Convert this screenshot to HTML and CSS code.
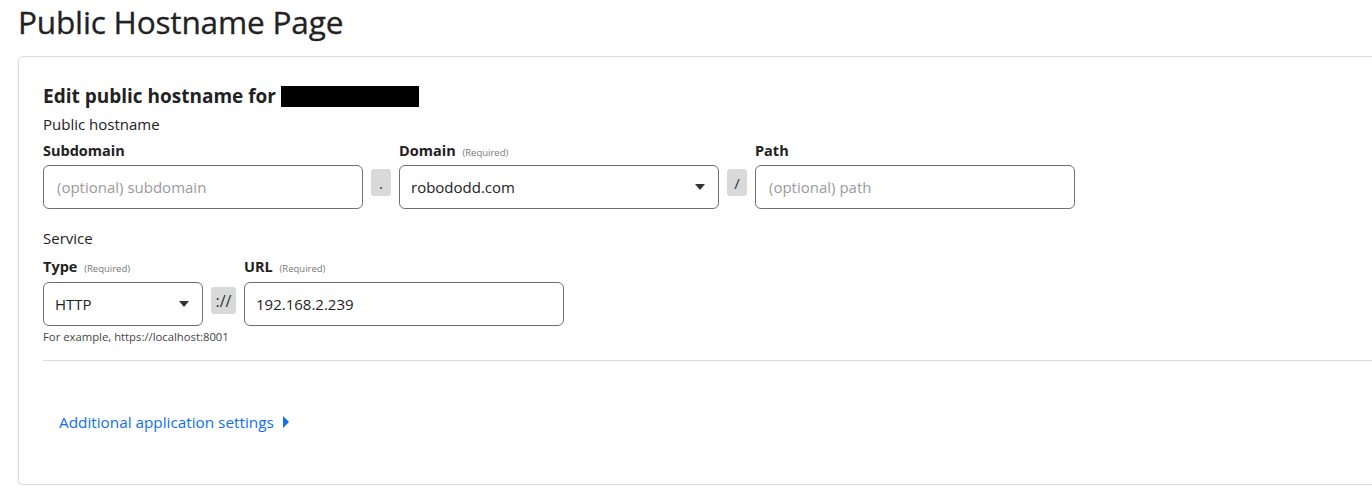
FILE: index.html
```html
<!DOCTYPE html>
<html lang="en">
<head>
<meta charset="utf-8">
<title>Public Hostname Page</title>
<link rel="stylesheet" href="styles.css">
</head>
<body>
<h1 class="page-title">Public Hostname Page</h1>
<section class="card">
  <h2 class="card-title">Edit public hostname for <span class="redacted"></span></h2>
  <div class="group-label">Public hostname</div>
  <div class="field-row">
    <div class="field">
      <label class="field-label">Subdomain</label>
      <div class="input"><span class="placeholder">(optional) subdomain</span></div>
    </div>
    <span class="sep">.</span>
    <div class="field">
      <label class="field-label">Domain <span class="req">(Required)</span></label>
      <div class="input select"><span class="value">robododd.com</span><span class="caret"></span></div>
    </div>
    <span class="sep">/</span>
    <div class="field">
      <label class="field-label">Path</label>
      <div class="input"><span class="placeholder">(optional) path</span></div>
    </div>
  </div>

  <div class="group-label service">Service</div>
  <div class="field-row service-row">
    <div class="field small">
      <label class="field-label">Type <span class="req">(Required)</span></label>
      <div class="input select small"><span class="value">HTTP</span><span class="caret"></span></div>
      <div class="hint">For example, https://localhost:8001</div>
    </div>
    <span class="sep wide">://</span>
    <div class="field">
      <label class="field-label">URL <span class="req">(Required)</span></label>
      <div class="input"><span class="value">192.168.2.239</span></div>
    </div>
  </div>

  <hr class="divider">

  <a class="more-link" href="#">Additional application settings <span class="tri"></span></a>
</section>
</body>
</html>
```

FILE: styles.css
```css
html, body {
  margin: 0;
  padding: 0;
  background: #fff;
  overflow: hidden;
}
body {
  font-family: "Open Sans", "Noto Sans", sans-serif;
  color: #222;
  padding: 0 0 0 18px;
}
.page-title {
  margin: 0;
  font-size: 31.6px;
  font-weight: 400;
  line-height: 44px;
  color: #222;
  letter-spacing: -0.2px;
  -webkit-text-stroke: 0.3px #222;
}
.card {
  margin-top: 12px;
  margin-right: -40px;
  border: 1px solid #dcdcdc;
  border-radius: 5px;
  box-shadow: 0 1px 3px rgba(0,0,0,0.08);
  padding: 24px 24px 40px 24px;
  height: 429px;
  box-sizing: border-box;
}
.card-title {
  margin: 0;
  font-size: 19px;
  font-weight: 700;
  line-height: 30px;
  color: #222;
  display: flex;
  align-items: center;
  gap: 5px;
}
.redacted {
  display: inline-block;
  width: 138px;
  height: 21px;
  background: #000;
}
.group-label {
  font-size: 15px;
  line-height: 20px;
  margin-top: 3px;
}
.group-label.service {
  margin-top: 19px;
  margin-bottom: 2px;
}
.field-row {
  display: flex;
  align-items: flex-start;
  gap: 8px;
}
.field {
  display: flex;
  flex-direction: column;
}
.field.small {
  width: 160px;
}
.field-label {
  font-size: 14.5px;
  font-weight: 700;
  line-height: 20px;
  height: 20px;
  margin: 7px 0 4px 0;
  color: #222;
  white-space: nowrap;
}
.service-row .field-label {
  margin-bottom: 5px;
}
.service-row .sep {
  margin-top: 37px;
}
.req {
  font-weight: 400;
  font-size: 9.5px;
  line-height: 1;
  color: #777;
  margin-left: 3px;
}
.input {
  box-sizing: border-box;
  width: 320px;
  height: 44px;
  border: 1px solid #6f6f6f;
  border-radius: 6px;
  display: flex;
  align-items: center;
  padding: 0 13px 0 11px;
  font-size: 15px;
}
.input.small {
  width: 160px;
}
.placeholder {
  color: #9a9a9a;
  padding-left: 2px;
}
.value {
  color: #222;
}
.select {
  justify-content: space-between;
}
.caret {
  width: 0;
  height: 0;
  border-left: 5px solid transparent;
  border-right: 5px solid transparent;
  border-top: 6px solid #333;
}
.sep {
  margin-top: 35px;
  box-sizing: border-box;
  width: 20px;
  height: 27px;
  border-radius: 3px;
  background: #d9d9d9;
  font-size: 15px;
  color: #333;
  display: flex;
  align-items: center;
  justify-content: center;
}
.sep.wide {
  width: 25px;
  font-size: 16px;
}
.hint {
  font-size: 11.3px;
  color: #444;
  margin-top: 3px;
  white-space: nowrap;
}
.divider {
  margin: 16px -24px 0 0;
  border: 0;
  border-top: 1px solid #dadada;
}
.more-link {
  display: inline-flex;
  align-items: center;
  gap: 9px;
  margin: 51px 0 0 16px;
  font-size: 15.3px;
  color: #0d6efd;
  text-decoration: none;
}
.tri {
  width: 0;
  height: 0;
  border-top: 6px solid transparent;
  border-bottom: 6px solid transparent;
  border-left: 6px solid #0d6efd;
}
```
